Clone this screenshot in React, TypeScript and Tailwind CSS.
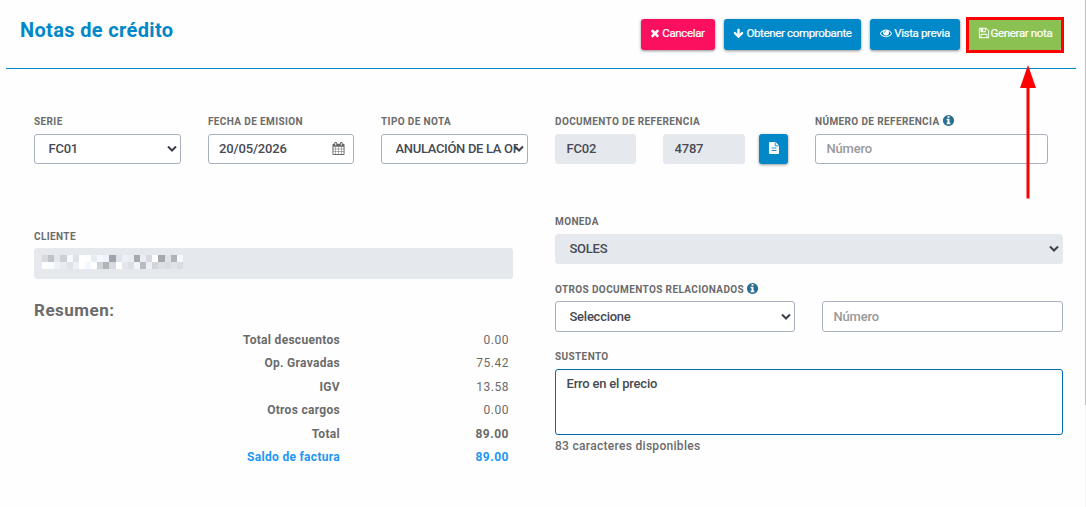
import type { ReactNode } from "react";

const icons = {
  times:
    "M1490 1322q0 40-28 68l-136 136q-28 28-68 28t-68-28l-294-294-294 294q-28 28-68 28t-68-28l-136-136q-28-28-28-68t28-68l294-294-294-294q-28-28-28-68t28-68l136-136q28-28 68-28t68 28l294 294 294-294q28-28 68-28t68 28l136 136q28 28 28 68t-28 68l-294 294 294 294q28 28 28 68z",
  arrowDown:
    "M1675 832q0 53-37 90l-651 652q-39 37-91 37-53 0-90-37l-651-652q-38-36-38-90 0-53 38-91l74-75q39-37 91-37 53 0 90 37l294 294v-704q0-52 38-90t90-38h128q52 0 90 38t38 90v704l294-294q37-37 90-37 52 0 91 37l75 75q37 39 37 91z",
  eye: "M1664 960q-152-236-381-353 61 104 61 225 0 185-131.5 316.5t-316.5 131.5-316.5-131.5-131.5-316.5q0-121 61-225-229 117-381 353 133 205 333.5 326.5t434.5 121.5 434.5-121.5 333.5-326.5zm-720-384q0-20-14-34t-34-14q-125 0-214.5 89.5t-89.5 214.5q0 20 14 34t34 14 34-14 14-34q0-86 61-147t147-61q20 0 34-14t14-34zm848 384q0 34-20 69-140 230-376.5 368.5t-499.5 138.5-499.5-139-376.5-368q-20-35-20-69t20-69q140-229 376.5-368t499.5-139 499.5 139 376.5 368q20 35 20 69z",
  save: "M512 1536h768v-384h-768v384zm896 0h128v-896q0-14-10-38.5t-20-34.5l-281-281q-10-10-34-20t-39-10v416q0 40-28 68t-68 28h-576q-40 0-68-28t-28-68v-416h-128v1280h128v-416q0-40 28-68t68-28h832q40 0 68 28t28 68v416zm-384-928v-320q0-13-9.5-22.5t-22.5-9.5h-192q-13 0-22.5 9.5t-9.5 22.5v320q0 13 9.5 22.5t22.5 9.5h192q13 0 22.5-9.5t9.5-22.5zm640 32v928q0 40-28 68t-68 28h-1344q-40 0-68-28t-28-68v-1344q0-40 28-68t68-28h928q40 0 88 20t76 48l280 280q28 28 48 76t20 88z",
  info: "M1152 1376v-160q0-14-9-23t-23-9h-96v-512q0-14-9-23t-23-9h-320q-14 0-23 9t-9 23v160q0 14 9 23t23 9h96v320h-96q-14 0-23 9t-9 23v160q0 14 9 23t23 9h448q14 0 23-9t9-23zm-128-896v-160q0-14-9-23t-23-9h-192q-14 0-23 9t-9 23v160q0 14 9 23t23 9h192q14 0 23-9t9-23zm640 416q0 209-103 385.5t-279.5 279.5-385.5 103-385.5-103-279.5-279.5-103-385.5 103-385.5 279.5-279.5 385.5-103 385.5 103 279.5 279.5 103 385.5z",
  calendar:
    "M192 1664h288v-288h-288v288zm352 0h320v-288h-320v288zm-352-352h288v-320h-288v320zm352 0h320v-320h-320v320zm-352-384h288v-288h-288v288zm736 736h320v-288h-320v288zm-384-736h320v-288h-320v288zm768 736h288v-288h-288v288zm-384-352h320v-320h-320v320zm-352-864v-288q0-13-9.5-22.5t-22.5-9.5h-64q-13 0-22.5 9.5t-9.5 22.5v288q0 13 9.5 22.5t22.5 9.5h64q13 0 22.5-9.5t9.5-22.5zm736 864h288v-320h-288v320zm-384-384h320v-288h-320v288zm384 0h288v-288h-288v288zm32-480v-288q0-13-9.5-22.5t-22.5-9.5h-64q-13 0-22.5 9.5t-9.5 22.5v288q0 13 9.5 22.5t22.5 9.5h64q13 0 22.5-9.5t9.5-22.5zm384-64v1280q0 52-38 90t-90 38h-1408q-52 0-90-38t-38-90v-1280q0-52 38-90t90-38h128v-96q0-66 47-113t113-47h64q66 0 113 47t47 113v96h384v-96q0-66 47-113t113-47h64q66 0 113 47t47 113v96h128q52 0 90 38t38 90z",
};

function Icon({ name, className }: { name: keyof typeof icons; className: string }) {
  return (
    <svg viewBox="0 0 1792 1792" fill="currentColor" className={`shrink-0 ${className}`}>
      <path d={icons[name]} />
    </svg>
  );
}

function Field({ label, info, labelHeight = "h-[19px]", className = "", children }: { label: string; info?: boolean; labelHeight?: string; className?: string; children: ReactNode }) {
  return (
    <div className={className}>
      <div className={`flex items-start gap-[2px] whitespace-nowrap pt-px text-[10px] leading-3 font-bold tracking-[0.38px] text-[#6b6b6b] ${labelHeight}`}>
        {label}
        {info && <Icon name="info" className="-mt-[2px] size-[13px] text-[#2a6f92]" />}
      </div>
      {children}
    </div>
  );
}

const control = "block w-full rounded-[3px] border text-[13px] font-medium text-[#464a53] outline-none";
const plain = "border-[#a9b1c0] bg-white";
const disabled = "border-[#e5e8ed] bg-[#e5e8ed]";

function Select({ value, height = "h-[30px] pb-px", tone = plain, tracking = "tracking-[-0.25px]" }: { value: string; height?: string; tone?: string; tracking?: string }) {
  return (
    <div className="relative">
      <select className={`${control} ${height} ${tone} ${tracking} appearance-none pl-[13.500px] pr-[9px]`}>
        <option>{value}</option>
      </select>
      <svg viewBox="0 0 10 7" className="pointer-events-none absolute right-[4px] top-1/2 -mt-[4px] h-[7px] w-[10px]">
        <path d="M1 1.500L5 5.500L9 1.500" fill="none" stroke="#3c404a" strokeWidth="2" />
      </svg>
    </div>
  );
}

function Input({ value, placeholder, height = "h-[30px]", tone = plain }: { value?: string; placeholder?: string; height?: string; tone?: string }) {
  return <input readOnly value={value ?? ""} placeholder={placeholder} className={`${control} ${height} ${tone} px-[10.500px] pb-px tracking-[-0.2px] placeholder:text-[#999]`} />;
}

function Button({ icon, className, iconClass, children }: { icon: keyof typeof icons; className: string; iconClass: string; children: ReactNode }) {
  return (
    <button className={`flex h-[31px] items-center justify-center whitespace-nowrap rounded-[3px] pb-[3px] text-[11.500px] leading-4 tracking-[-0.35px] text-white shadow-[0_1px_3px_rgba(0,0,0,0.45)] [-webkit-text-stroke:0.2px_white] ${className}`}>
      <Icon name={icon} className={iconClass} />
      {children}
    </button>
  );
}

const totals = [
  { label: "Total descuentos", amount: "0.00", style: "" },
  { label: "Op. Gravadas", amount: "75.42", style: "" },
  { label: "IGV", amount: "13.58", style: "" },
  { label: "Otros cargos", amount: "0.00", style: "" },
  { label: "Total", amount: "89.00", style: "font-bold" },
  { label: "Saldo de factura", amount: "89.00", style: "font-bold text-[#2196f3]" },
];

const mosaic = [
  ["#d7d9dd", "#bfc2c7", "#e3e6ec", "#cdd0d4", "#f6faff", "#dfe2e8", "#fff", "#fff", "#e9ecf3", "#f5f9ff", "#eff4fc", "#9fa2a8", "#dfe3ea", "#edf0f4", "#e8ecf3", "#a6a9ae", "#e9edf4", "#d6d9df", "#fff", "#a5a8ad", "#dfe3e9", "#b0b3b8", "#f5faff"],
  ["#fff", "#fafdff", "#eef2f7", "#e8ecf2", "#dfe2e7", "#edf0f5", "#fff", "#f3f8ff", "#fff", "#cfd2d7", "#b0b3b8", "#d7dadf", "#fff", "#e3e6eb", "#dcdfe4", "#f1f5fb", "#b8bbc0", "#edf1f7", "#d2d5da", "#dcdfe3", "#d9dce1", "#e0e3e8", "#d9dce1"],
];

export default function App() {
  return (
    <div className="relative flex h-[507px] w-[1086px] overflow-hidden bg-[#fefefe] font-['Roboto',sans-serif] text-[#6b6b6b]">
      <main className="min-w-0 flex-1">
        <header className="ml-[6px] mr-[9px] flex h-[69px] items-start justify-between border-b border-[#0088c8] pl-[14px] pr-[15px]">
          <h1 className="mt-[18px] text-[20px] leading-6 font-bold tracking-[0.35px] text-[#0088c8]">Notas de crédito</h1>
          <div className="mt-[19px] flex gap-[9px]">
            <Button icon="times" iconClass="mr-[1px] size-[12px]" className="w-[74px] bg-[#fb1060] pr-[2px]">Cancelar</Button>
            <Button icon="arrowDown" iconClass="mr-[2px] size-[11px]" className="w-[137px] bg-[#0088c8]">Obtener comprobante</Button>
            <Button icon="eye" iconClass="mr-[2px] size-[12px]" className="w-[90px] bg-[#0088c8]">Vista previa</Button>
            <Button icon="save" iconClass="mr-[1px] size-[12px]" className="w-[92px] bg-[#8bc052]">Generar nota</Button>
          </div>
        </header>

        <section className="ml-[34px] flex pt-[46px]">
          <Field label="SERIE" className="w-[147px]"><Select value="FC01" /></Field>
          <Field label="FECHA DE EMISION" className="ml-[27px] w-[146px]">
            <div className={`${control} ${plain} flex h-[30px] items-center justify-between pl-[10px] pr-[8px]`}>
              <span className="tracking-[-0.15px]">20/05/2026</span>
              <Icon name="calendar" className="mb-px size-[13px] text-[#666]" />
            </div>
          </Field>
          <Field label="TIPO DE NOTA" className="ml-[27px] w-[147px]"><Select value="ANULACIÓN DE LA OPERACIÓN" tracking="tracking-[-0.32px]" /></Field>
          <Field label="DOCUMENTO DE REFERENCIA" className="ml-[27px] w-[233px]">
            <div className="flex">
              <div className="w-[81px]"><Input value="FC02" tone={disabled} /></div>
              <div className="ml-[27px] w-[82px]"><Input value="4787" tone={disabled} /></div>
              <button className="ml-[14px] flex h-[30px] w-[29px] items-center justify-center rounded-[3px] bg-[#0088c8] pb-[2px] shadow-[0_1px_3px_rgba(0,0,0,0.4)]">
                <svg viewBox="0 0 10 12" className="h-[12px] w-[10px]">
                  <path d="M1 0H6.5L10 3.5V11a1 1 0 0 1-1 1H1a1 1 0 0 1-1-1V1a1 1 0 0 1 1-1Z" fill="#fff" />
                  <path d="M6.2.5V3.8H9.6M2.5 6H7.5M2.5 8.5H7.5" fill="none" stroke="#0088c8" strokeWidth=".9" />
                </svg>
              </button>
            </div>
          </Field>
          <Field label="NÚMERO DE REFERENCIA" info className="ml-[27px] w-[233px]"><Input placeholder="Número" /></Field>
        </section>

        <div className="ml-[34px] flex pt-[51px]">
          <section className="w-[479px] pt-[15px]">
            <Field label="CLIENTE" labelHeight="h-[18px]">
              <div className="h-[31px] rounded-[3px] bg-[#e5e8ed] pl-2 pt-[7px]">
                {mosaic.map((row, r) => (
                  <div key={r} className="flex h-[7px]">
                    {row.map((color, c) => <span key={c} className="w-[6.13px]" style={{ backgroundColor: color }} />)}
                  </div>
                ))}
              </div>
            </Field>
            <h2 className="mt-[20px] text-[17px] leading-[22px] font-bold tracking-[0.5px]">Resumen:</h2>
            <div className="mt-[8px] text-[12px] leading-[23.4px] tracking-[0.5px]">
              {totals.map(({ label, amount, style }) => (
                <div key={label} className={`flex ${style}`}>
                  <span className="w-[306px] text-right font-bold tracking-[0.3px]">{label}</span>
                  <span className="w-[169px] text-right">{amount}</span>
                </div>
              ))}
            </div>
          </section>

          <section className="ml-[42px] w-[508px]">
            <Field label="MONEDA"><Select value="SOLES" tone={disabled} /></Field>
            <div className="mt-[19px] flex">
              <Field label="OTROS DOCUMENTOS RELACIONADOS" info labelHeight="h-[18px]" className="w-[240px]"><Select value="Seleccione" height="h-[31px]" /></Field>
              <div className="ml-[27px] w-[241px] pt-[18px]"><Input placeholder="Número" height="h-[31px]" /></div>
            </div>
            <Field label="SUSTENTO" className="mt-[18px]">
              <textarea readOnly value="Erro en el precio" className={`${control} h-[66px] resize-none border-[#006bae]! bg-white px-[10.500px] py-[6px] leading-4 tracking-[-0.2px]`} />
            </Field>
            <p className="mt-[3px] text-[12px] leading-4 font-medium tracking-[0.3px]">83 caracteres disponibles</p>
          </section>
        </div>
      </main>
      <div className="w-px bg-[#f5f5fc]"><div className="h-[405px] bg-[#c1c1c1]" /></div>

      <div className="absolute left-[966px] top-[17px] h-[36px] w-[98px] border-[3px] border-[#f00]" />
      <svg viewBox="0 0 18 134" className="absolute left-[1019px] top-[65px] h-[134px] w-[18px]">
        <path d="M9 0L17 23H1Z" fill="#f00" />
        <path d="M9 22V133.500" stroke="#f00" strokeWidth="3" />
      </svg>
    </div>
  );
}
